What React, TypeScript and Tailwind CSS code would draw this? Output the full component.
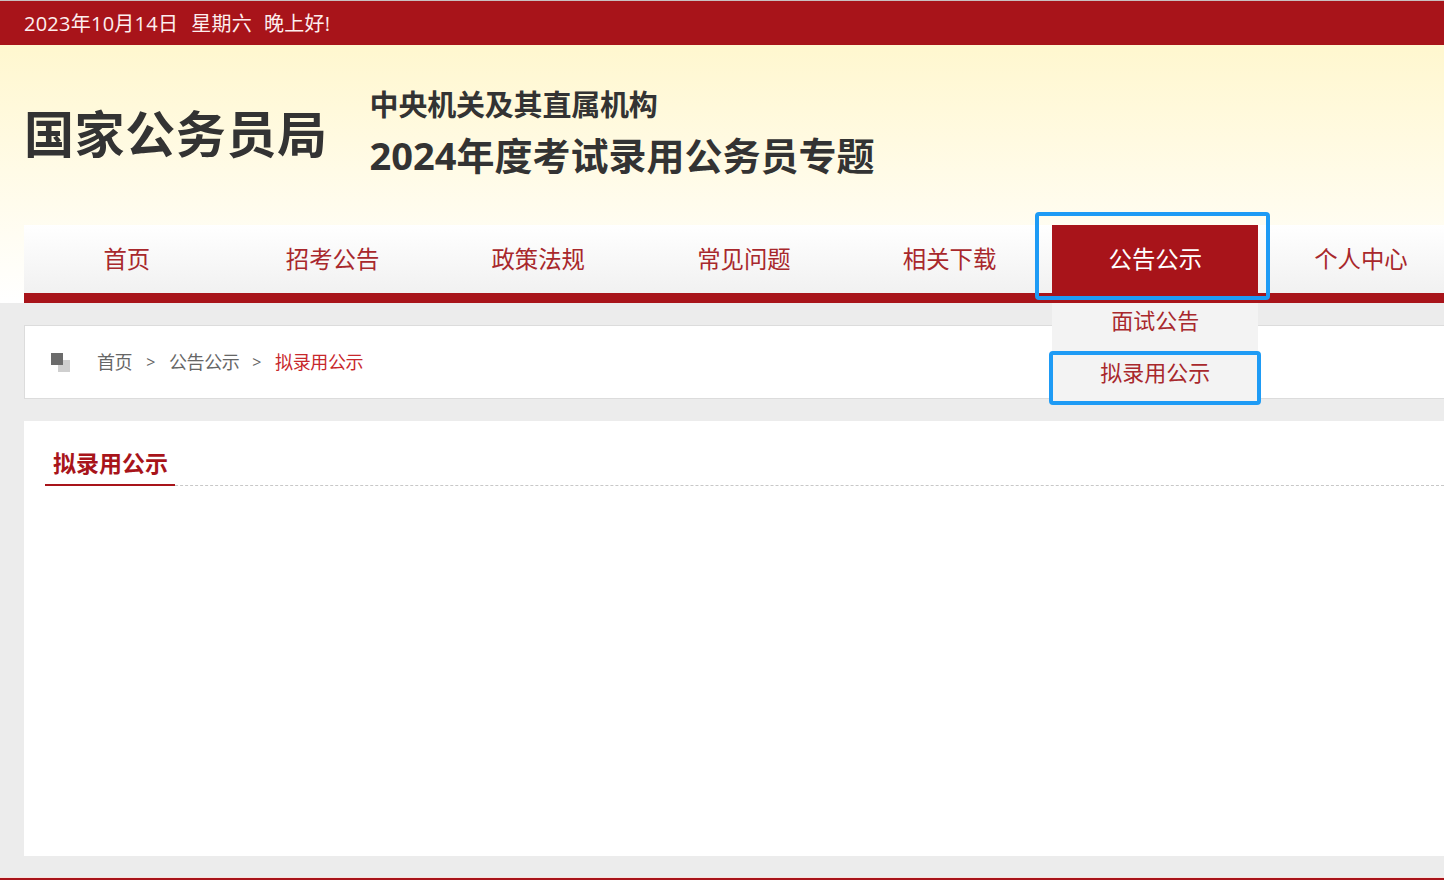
const navItems = ["首页", "招考公告", "政策法规", "常见问题", "相关下载", "公告公示", "个人中心"]

const cjk = "font-['Open_Sans','Noto_Sans_CJK_SC',sans-serif]"

export default function App() {
  return (
    <div className={`flex h-[880px] w-[1444px] flex-col overflow-hidden bg-[#ececec] ${cjk}`}>
      <header className="h-[303px] shrink-0 bg-gradient-to-b from-[#fff7cf] from-[15%] to-white to-[100%]">
        <div className="flex h-[45px] items-center border-t border-[#c9c0c0] bg-[#a8141a] pb-[1px] pl-6 pt-[2px] text-[20px] tracking-[0.25px] text-[#fdeeee]">
          <span>2023年10月14日</span>
          <span className="ml-[13px]">星期六</span>
          <span className="ml-[12px]">晚上好!</span>
        </div>

        <div className="flex h-[180px] items-center pl-6">
          <h1 className="mt-[-2px] text-[50px] font-bold leading-none tracking-[0.6px] text-[#333]">国家公务员局</h1>
          <div className="ml-[42px] mt-[-3px] font-bold text-[#333]">
            <p className="text-[29px] leading-[40px] tracking-[-0.2px]">中央机关及其直属机构</p>
            <p className="mt-[3px] text-[38px] leading-[55px] tracking-[0px]">2024年度考试录用公务员专题</p>
          </div>
        </div>

        <nav className="relative ml-6 flex h-[78px] border-b-[10px] border-[#a8141a] bg-gradient-to-b from-white to-[#f1f1f1]">
          {navItems.map((item) => (
            <div
              key={item}
              className={
                item === "公告公示"
                  ? "relative flex h-[68px] w-[205.7px] shrink-0 items-center justify-center bg-[#a8141a] pt-[2px] text-[23.4px] text-white"
                  : "flex h-[68px] w-[205.7px] shrink-0 items-center justify-center pt-[2px] text-[23.4px] text-[#a8282c]"
              }
            >
              {item}
              {item === "公告公示" && (
                <div className="absolute left-0 top-[78px] z-10 w-full bg-[#f3f3f3] text-center text-[#a8282c]">
                  <div className="h-[48px] text-[22px] leading-[35px]">面试公告</div>
                  <div className="h-[52px] pt-[3px] text-[22px] leading-[37px]">拟录用公示</div>
                </div>
              )}
            </div>
          ))}
          <div className="absolute left-[1011px] top-[-13px] z-20 h-[88px] w-[235px] rounded-[4px] border-[4px] border-[#1e9bf5]" />
          <div className="absolute left-[1025px] top-[126px] z-20 h-[54px] w-[212px] rounded-[4px] border-[4px] border-[#1e9bf5]" />
        </nav>
      </header>

      <main className="flex-1 pl-6">
        <div className="mt-[22px] flex h-[74px] items-center border border-r-0 border-[#dcdcdc] bg-white text-[18px] tracking-[-0.4px] text-[#666]">
          <div className="relative ml-[26px] h-[19px] w-[19px] blur-[0.6px]">
            <span className="absolute bottom-0 right-0 h-[12px] w-[12px] bg-[#cfcfcf]" />
            <span className="absolute left-0 top-0 h-[12px] w-[12px] bg-[#6b6b6b]" />
          </div>
          <span className="ml-[27px]">首页</span>
          <span className="ml-[14px] text-[16px]">&gt;</span>
          <span className="ml-[14px]">公告公示</span>
          <span className="ml-[13px] text-[16px]">&gt;</span>
          <span className="ml-[14px] text-[#c8282c]">拟录用公示</span>
        </div>

        <section className="mt-[22px] h-[435px] bg-white pl-[21px] pt-[25px]">
          <div className="flex items-end border-b border-dashed border-[#c8c8c8]">
            <h2 className="-mb-px h-[40px] w-[130px] border-b-[2px] border-[#a8141a] pl-2 text-[23px] font-bold leading-[35px] text-[#a8141a]">
              拟录用公示
            </h2>
          </div>
        </section>
      </main>

      <footer className="h-[3px] shrink-0 border-t border-[#fbe3dd] bg-[#a8141a]" />
    </div>
  )
}
